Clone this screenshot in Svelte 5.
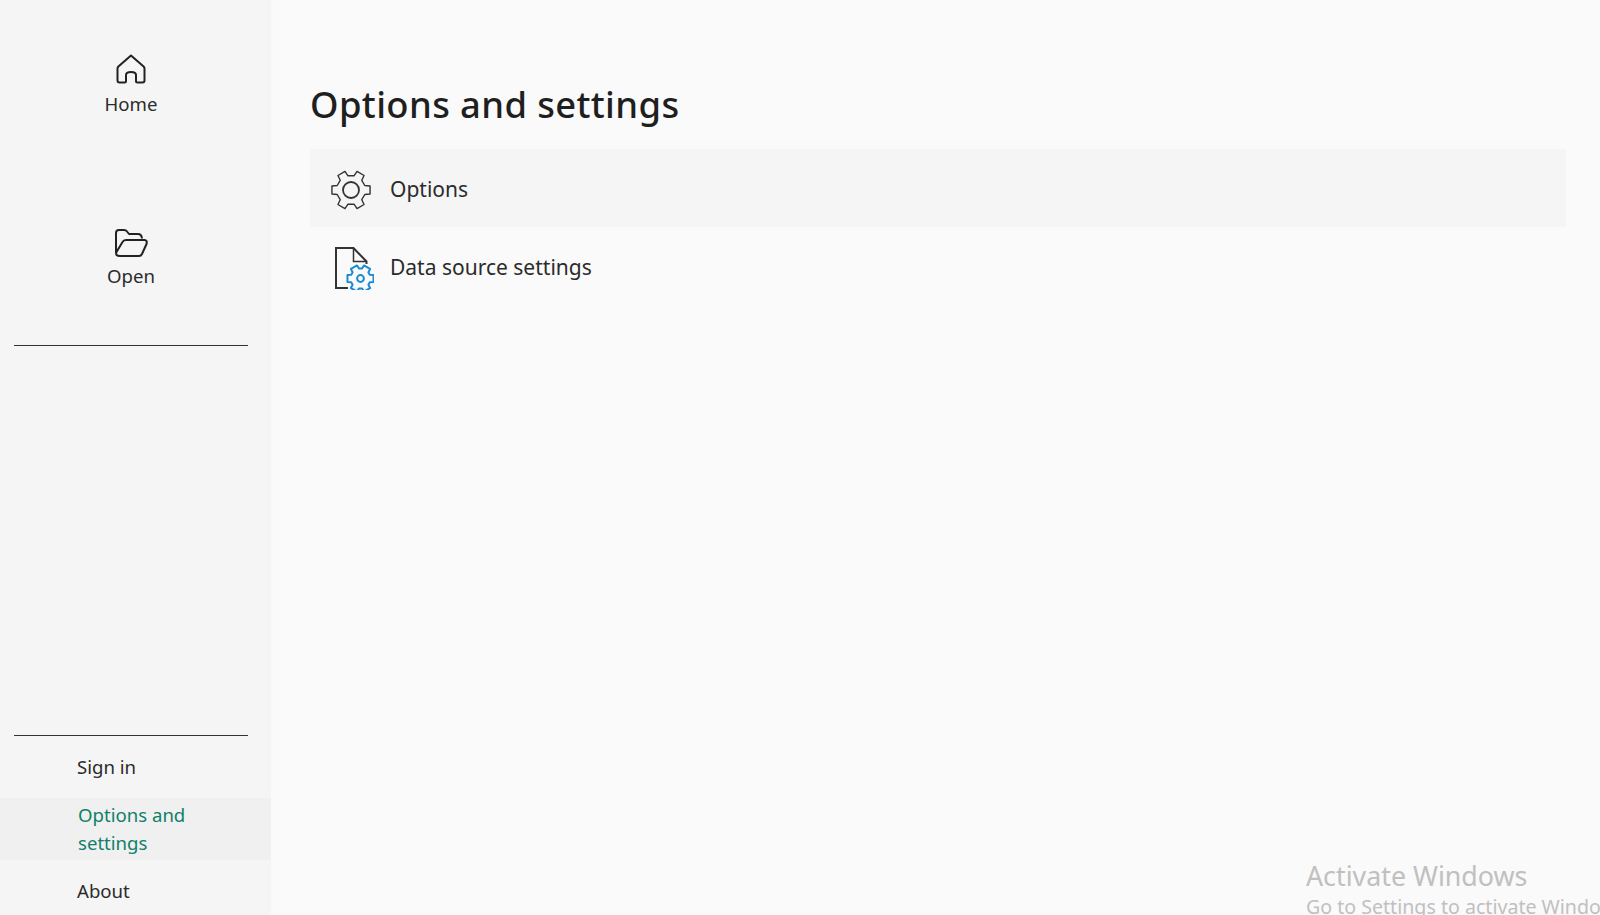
<script>
  const topItems = ['Home', 'Open'];
  const bottomItems = [
    { label: 'Sign in' },
    { label: 'Options and settings', active: true },
    { label: 'About' }
  ];

  // six-toothed cog outline, teeth at 0, 60, 120...
  function cog(cx, cy, outer, inner, tip = 12, root = 18) {
    const pts = [];
    for (let i = 0; i < 6; i++) {
      const a = (i * 60 * Math.PI) / 180;
      const at = (r, d) => {
        const t = a + (d * Math.PI) / 180;
        return `${(cx + r * Math.cos(t)).toFixed(2)} ${(cy + r * Math.sin(t)).toFixed(2)}`;
      };
      pts.push(at(inner, -root), at(outer, -tip), at(outer, tip), at(inner, root));
    }
    return 'M' + pts.join('L') + 'Z';
  }
</script>

<div class="page">
  <nav class="sidebar">
    <div class="top-items">
      {#each topItems as item}
        <div class="big-item">
          {#if item === 'Home'}
            <svg class="big-icon" width="30" height="30" viewBox="0 0 30 30" fill="none" stroke="#222" stroke-width="2" stroke-linejoin="round">
              <path d="M15 1.5 L27.6 12.5 Q28.5 13.4 28.5 14.5 V26.5 Q28.5 28.5 26.5 28.5 H21.5 Q20 28.5 20 27 V21 Q20 18 15 18 Q10 18 10 21 V27 Q10 28.5 8.5 28.5 H3.5 Q1.5 28.5 1.5 26.5 V14.5 Q1.5 13.4 2.4 12.5 Z" />
            </svg>
          {:else}
            <svg class="big-icon open-icon" width="34" height="30" viewBox="0 0 34 30" fill="none" stroke="#222" stroke-width="2" stroke-linejoin="round">
              <path d="M2 25 V5 Q2 2 5 2 H10 Q12 2 13 3.5 L15 6 H24 Q27.5 6 28 10.5" />
              <path d="M6 28 H25 Q27 28 28 26 L32.5 16 Q33.5 12 30.5 12 H12 Q9.5 12 8.5 14 L2.5 24 Q1 28 6 28 Z" />
            </svg>
          {/if}
          <span>{item}</span>
        </div>
      {/each}
    </div>
    <hr class="rule" />

    <div class="bottom-items">
      <hr class="rule" />
      {#each bottomItems as item}
        <div class="small-item" class:active={item.active}>
          <span>{item.label}</span>
        </div>
      {/each}
    </div>
  </nav>

  <main class="content">
    <h1>Options and settings</h1>
    <div class="row hovered">
      <svg class="row-icon" width="42" height="42" viewBox="0 0 42 42" fill="none">
        <path d={cog(21, 21, 19.5, 14.5)} stroke="#333" stroke-width="1.4" stroke-linejoin="round" />
        <circle cx="21" cy="21" r="8" stroke="#333" stroke-width="1.8" />
      </svg>
      <span>Options</span>
    </div>
    <div class="row">
      <svg class="row-icon" width="44" height="44" viewBox="0 0 44 44" fill="none">
        <path d="M18 42 H6 V2 H23.5 L36.5 15.5 V18" stroke="#333" stroke-width="2" />
        <path d="M23.5 2 V15.5 H36.5" stroke="#333" stroke-width="1.5" />
        <path d={cog(30.5, 32.5, 13.5, 10, 15, 22)} fill="#fafafa" stroke="#1b8bd0" stroke-width="2" stroke-linejoin="round" />
        <circle cx="30.5" cy="32.5" r="3.4" stroke="#1b8bd0" stroke-width="2" />
      </svg>
      <span>Data source settings</span>
    </div>
  </main>

  <div class="activate">
    <div class="activate-title">Activate Windows</div>
    <div class="activate-sub">Go to Settings to activate Windows.</div>
  </div>
</div>

<style>
  :global(body) {
    margin: 0;
  }

  .page {
    position: relative;
    display: flex;
    width: 1600px;
    height: 915px;
    overflow: hidden;
    background: #fafafa;
    color: #2b2b2b;
    font-family: "Noto Sans", "Open Sans", sans-serif;
  }

  .sidebar {
    display: flex;
    flex-direction: column;
    flex: none;
    width: 271px;
    background: #f5f5f5;
  }

  .top-items {
    display: flex;
    flex-direction: column;
    gap: 112px;
    width: 262px;
    padding-top: 54px;
  }

  .big-item {
    display: flex;
    flex-direction: column;
    align-items: center;
    gap: 7px;
    font-size: 18.6px;
    line-height: 25px;
  }

  .big-icon {
    display: block;
  }

  .open-icon {
    margin-bottom: -2px;
  }

  .rule {
    flex: none;
    width: 234px;
    height: 0;
    margin: 0 0 0 14px;
    border: 0;
    border-top: 1.5px solid #333;
  }

  .top-items + .rule {
    margin-top: 57px;
  }

  .bottom-items {
    margin-top: auto;
  }

  .small-item {
    height: 62px;
    padding: 17px 60px 0 77px;
    box-sizing: border-box;
    font-size: 18.6px;
    line-height: 28px;
  }

  .small-item:last-child {
    height: 55px;
  }

  .small-item.active {
    padding: 3px 60px 0 78px;
    background: #f0f0f0;
    color: #11806a;
  }

  .content {
    flex: 1;
    padding: 81px 34px 0 39px;
  }

  h1 {
    margin: 0 0 22px;
    font-size: 36.4px;
    line-height: 46px;
    font-weight: 500;
    letter-spacing: 0.37px;
    color: #1f1f1f;
  }

  .row {
    display: flex;
    align-items: center;
    gap: 18px;
    height: 78px;
    padding: 2px 0 0 20px;
    box-sizing: border-box;
    font-size: 21px;
  }

  .hovered {
    background: #f5f5f5;
  }

  .row-icon {
    flex: none;
    margin-top: 2px;
  }

  .row:not(.hovered) .row-icon {
    margin-right: -2px;
  }

  .activate {
    position: absolute;
    left: 1306px;
    top: 858px;
    white-space: nowrap;
    color: #c0c0c0;
  }

  .activate-title {
    font-size: 26.8px;
    line-height: 36px;
  }

  .activate-sub {
    padding-top: 1px;
    font-size: 19.6px;
    line-height: 24px;
  }
</style>
